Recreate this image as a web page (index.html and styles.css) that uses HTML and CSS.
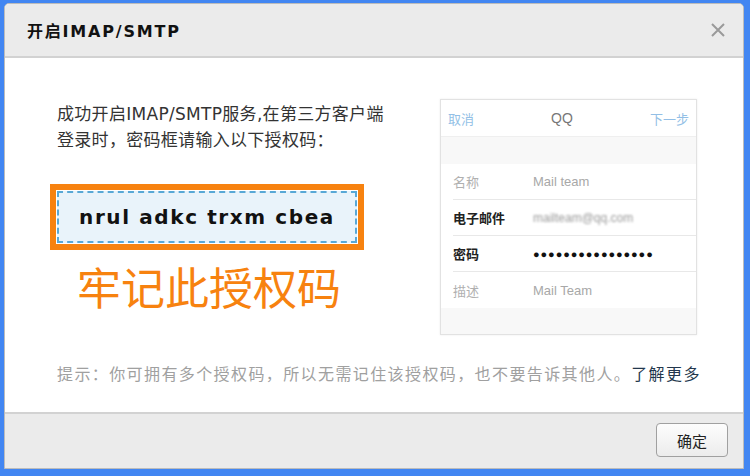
FILE: index.html
```html
<!DOCTYPE html>
<html lang="zh-CN">
<head>
<meta charset="utf-8">
<title>开启IMAP/SMTP</title>
<link rel="stylesheet" href="styles.css">
</head>
<body>
<div class="dialog">
  <div class="header">
    <div class="title">开启IMAP/SMTP</div>
    <svg class="close" width="16" height="16" viewBox="0 0 16 16"><path d="M2 2 L14 14 M14 2 L2 14" stroke="#9a9a9a" stroke-width="2" fill="none"/></svg>
  </div>
  <div class="main">
    <div class="top">
      <div class="left">
        <p class="intro">成功开启IMAP/SMTP服务,在第三方客户端<br>登录时，密码框请输入以下授权码：</p>
        <div class="code-outer">
          <div class="code-inner">nrul adkc trxm cbea</div>
        </div>
        <div class="remember">牢记此授权码</div>
      </div>
      <div class="card">
        <div class="card-head">
          <span class="link">取消</span>
          <span class="qq">QQ</span>
          <span class="link">下一步</span>
        </div>
        <div class="band"></div>
        <div class="rows">
          <div class="row"><span class="label">名称</span><span class="val">Mail team</span></div>
          <div class="row"><span class="label strong">电子邮件</span><span class="val blur">mailteam@qq.com</span></div>
          <div class="row"><span class="label strong">密码</span><span class="val dots">●●●●●●●●●●●●●●●●</span></div>
          <div class="row"><span class="label">描述</span><span class="val">Mail Team</span></div>
        </div>
        <div class="band grow"></div>
      </div>
    </div>
    <p class="hint">提示：你可拥有多个授权码，所以无需记住该授权码，也不要告诉其他人。<a class="more">了解更多</a></p>
  </div>
  <div class="footer">
    <button class="ok">确定</button>
  </div>
</div>
</body>
</html>
```
FILE: styles.css
```css
html, body {
  margin: 0;
  padding: 0;
}
body {
  width: 750px;
  height: 476px;
  background: #4286f2;
  padding: 3px 0 0 4px;
  box-sizing: border-box;
  font-family: "DejaVu Sans", "Noto Sans CJK SC", sans-serif;
}
.dialog {
  width: 740px;
  height: 466px;
  box-sizing: border-box;
  border: 1px solid #bcbcbc;
  border-radius: 5px 5px 0 0;
  background: #fff;
  display: flex;
  flex-direction: column;
  overflow: hidden;
}
.header {
  height: 54px;
  flex: none;
  box-sizing: border-box;
  background: #ebebeb;
  border-bottom: 2px solid #d2d2d2;
  display: flex;
  align-items: center;
  justify-content: space-between;
  padding: 0 17px 0 22px;
}
.title {
  font-size: 16px;
  font-weight: bold;
  letter-spacing: 1.8px;
  color: #111;
}
.close {
  display: block;
}
.main {
  flex: 1;
  display: flex;
  flex-direction: column;
}
.top {
  display: flex;
}
.left {
  width: 383px;
  padding-left: 52px;
}
.intro {
  margin: 43px 0 0;
  font-size: 17px;
  line-height: 26px;
  color: #333;
  letter-spacing: 0.3px;
}
.code-outer {
  margin: 31px 0 0 -7px;
  width: 314px;
  height: 66px;
  box-sizing: border-box;
  border: 6px solid #f7820f;
  padding: 1px;
}
.code-inner {
  height: 100%;
  box-sizing: border-box;
  border: 2px dashed #58a8d6;
  background: #e9f3fa;
  display: flex;
  align-items: center;
  justify-content: center;
  font-size: 20px;
  font-weight: bold;
  letter-spacing: 1.6px;
  color: #111;
}
.remember {
  margin-top: 12px;
  margin-left: 20px;
  font-family: "Noto Sans CJK SC", sans-serif;
  font-size: 44px;
  line-height: 48px;
  color: #f7820f;
}
.card {
  margin-top: 41px;
  width: 257px;
  height: 236px;
  box-sizing: border-box;
  border: 1px solid #e2e2e2;
  box-shadow: 0 0 2px rgba(0,0,0,0.08);
  display: flex;
  flex-direction: column;
  font-family: "Liberation Sans", "Noto Sans CJK SC", sans-serif;
  font-size: 13px;
}
.card-head {
  height: 36px;
  flex: none;
  display: flex;
  align-items: center;
  justify-content: space-between;
  padding: 0 7px 0 7px;
  border-bottom: 1px solid #efefef;
}
.link {
  color: #93bfe6;
}
.qq {
  color: #777;
  font-size: 14px;
}
.band {
  height: 27px;
  flex: none;
  background: #f8f8f8;
}
.band.grow {
  flex: 1;
}
.rows {
  padding-left: 12px;
}
.row {
  height: 36px;
  box-sizing: border-box;
  display: flex;
  align-items: center;
  border-bottom: 1px solid #e8e8e8;
}
.row:last-child {
  border-bottom: none;
}
.label {
  width: 80px;
  color: #b0b0b0;
}
.label.strong {
  color: #222;
  font-weight: bold;
}
.val {
  color: #a8a8a8;
}
.val.blur {
  color: #999;
  filter: blur(1.2px);
  font-size: 12px;
}
.val.dots {
  color: #111;
  font-size: 11px;
  letter-spacing: 0.9px;
}
.hint {
  margin: 30px 0 0 52px;
  font-size: 16px;
  line-height: 20px;
  color: #a0a0a0;
  letter-spacing: 1.4px;
  white-space: nowrap;
}
.more {
  color: #23374d;
}
.footer {
  height: 56px;
  flex: none;
  box-sizing: border-box;
  background: #ebebeb;
  border-top: 2px solid #d2d2d2;
  display: flex;
  align-items: center;
  justify-content: flex-end;
  padding: 0 15px 2px 0;
}
.ok {
  width: 72px;
  height: 34px;
  border: 1px solid #a0a0a0;
  border-radius: 4px;
  background: linear-gradient(#fdfdfd, #ececec);
  font-family: "Noto Sans CJK SC", sans-serif;
  font-size: 15px;
  color: #222;
  padding: 0;
}
```
